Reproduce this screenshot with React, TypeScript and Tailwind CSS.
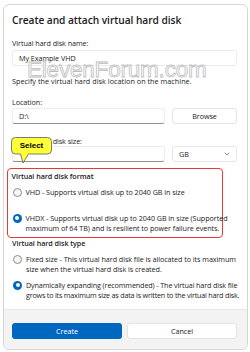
import React from "react";

function Radio({ checked, children }: { checked?: boolean; children: React.ReactNode }) {
  return (
    <div className="flex items-start gap-[4px] pl-[1px]">
      <div className="h-[10px] flex items-center shrink-0">
        {checked ? (
          <span className="w-[9px] h-[9px] rounded-full bg-[#0067c0] flex items-center justify-center">
            <span className="w-[4px] h-[4px] rounded-full bg-white" />
          </span>
        ) : (
          <span className="w-[9px] h-[9px] rounded-full border border-[#8b8b8b] bg-[#f6f6f6]" />
        )}
      </div>
      <p className="leading-[10px] whitespace-nowrap">{children}</p>
    </div>
  );
}

export default function App() {
  return (
    <div className="relative w-[250px] h-[352px] bg-white overflow-hidden text-[#1b1b1b] font-['Segoe_UI','Open_Sans',sans-serif]">
      <div className="ml-[3px] mt-[4px] w-[245px] h-[346px] border border-[#d6d6d6] rounded-[6px] overflow-hidden flex flex-col bg-white">
        {/* Content */}
        <div className="flex-1 min-h-0 pl-[8px] pr-[10px] pt-[8px] text-[7.2px] tracking-[-0.05px]">
          <h1 className="text-[10.2px] font-semibold leading-[14px] whitespace-nowrap">
            Create and attach virtual hard disk
          </h1>

          <p className="mt-[11px] leading-[10px]">Virtual hard disk name:</p>
          <div className="mt-[2px] h-[16px] rounded-[3px] border border-[#ececec] bg-white flex items-center pl-[6px]">
            My Example VHD
          </div>

          <p className="mt-[10px] leading-[10px] whitespace-nowrap tracking-[0.05px]">Specify the virtual hard disk location on the machine.</p>

          <p className="mt-[11px] leading-[10px]">Location:</p>
          <div className="mt-[1px] flex gap-[7px]">
            <div className="w-[153px] h-[16px] rounded-[3px] border border-[#ececec] border-b-[#8f8f8f] bg-white flex items-center pl-[6px]">
              D:\
            </div>
            <div className="flex-1 h-[16px] rounded-[3px] border border-[#e5e5e5] bg-white flex items-center justify-center">
              Browse
            </div>
          </div>

          <p className="mt-[12px] leading-[10px]">Virtual hard disk size:</p>
          <div className="flex gap-[7px]">
            <div className="w-[153px] h-[16px] rounded-[3px] border border-[#ececec] border-b-[#8f8f8f] bg-white" />
            <div className="flex-1 h-[16px] rounded-[3px] border border-[#e5e5e5] bg-white flex items-center justify-between pl-[6px] pr-[6px]">
              <span>GB</span>
              <svg width="6" height="4" viewBox="0 0 6 4" fill="none">
                <path d="M1 1l2 2 2-2" stroke="#6b6b6b" strokeWidth="0.8" strokeLinecap="round" strokeLinejoin="round" />
              </svg>
            </div>
          </div>

          <div className="mt-[6px] -ml-[5px] w-[216px] border-[1.5px] border-[#e53935] rounded-[4px] pl-[3.5px] pt-[2px] pb-[4px]">
            <p className="font-semibold leading-[10px]">Virtual hard disk format</p>
            <div className="mt-[6px]">
              <Radio>VHD - Supports virtual disk up to 2040 GB in size</Radio>
            </div>
            <div className="mt-[16px]">
              <Radio checked>
                VHDX - Supports virtual disk up to 2040 GB in size (Supported
                <br />
                maximum of 64 TB) and is resilient to power failure events.
              </Radio>
            </div>
          </div>

          <p className="font-semibold leading-[10px]">Virtual hard disk type</p>
          <div className="mt-[6px]">
            <Radio>
              Fixed size - This virtual hard disk file is allocated to its maximum
              <br />
              size when the virtual hard disk is created.
            </Radio>
          </div>
          <div className="mt-[6px]">
            <Radio checked>
              <span className="tracking-[-0.12px]">Dynamically expanding (recommended) - The virtual hard disk file</span>
              <br />
              <span className="tracking-[-0.2px]">grows to its maximum size as data is written to the virtual hard disk.</span>
            </Radio>
          </div>
        </div>

        {/* Footer */}
        <div className="h-[40px] shrink-0 bg-[#f3f3f3] border-t border-[#e8e8e8] pl-[8px] pr-[10px] pt-[13px] grid grid-cols-2 gap-[5px] text-[7.2px]">
          <div className="h-[16px] rounded-[3px] bg-[#0067c0] text-white flex items-center justify-center">
            Create
          </div>
          <div className="h-[16px] rounded-[3px] border border-[#e3e3e3] bg-white flex items-center justify-center">
            Cancel
          </div>
        </div>
      </div>

      {/* Watermark */}
      <div className="absolute left-[27px] top-[56px] text-[22.5px] leading-[28px] tracking-[-0.2px] text-white font-['Liberation_Sans',sans-serif] [-webkit-text-stroke:0.8px_#bdbdbd] pointer-events-none">
        ElevenForum.com
      </div>

      {/* Callout */}
      <div className="absolute left-[10px] top-[136px] w-[44px] h-[29px] pointer-events-none">
        <svg width="44" height="29" viewBox="0 0 44 29" className="absolute inset-0">
          <path
            d="M5.5 1.5h32a4 4 0 0 1 4 4v8.5a4 4 0 0 1-4 4H18.5L13 27l-2.5-9H5.5a4 4 0 0 1-4-4V5.5a4 4 0 0 1 4-4z"
            fill="#ffff3a"
            stroke="#5a5a5a"
            strokeWidth="0.8"
          />
        </svg>
        <div className="absolute left-[1.5px] top-[1.5px] w-[40px] h-[16.5px] flex items-center justify-center text-[8px] font-bold text-black font-['Liberation_Sans',sans-serif]">
          Select
        </div>
      </div>
    </div>
  );
}
